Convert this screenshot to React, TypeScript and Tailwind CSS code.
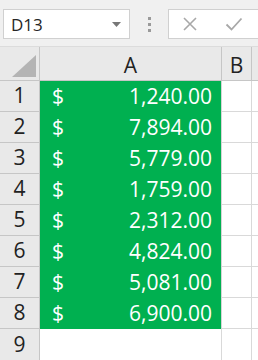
import React from 'react';

const values = ['1,240.00', '7,894.00', '5,779.00', '1,759.00', '2,312.00', '4,824.00', '5,081.00', '6,900.00'];

export default function App() {
  return (
    <div className="w-[258px] h-[360px] overflow-hidden bg-white" style={{ fontFamily: '"Open Sans", "Noto Sans", sans-serif' }}>
      {/* formula bar */}
      <div className="h-[47px] bg-[#f0f0f0] flex items-start pt-[9px] border-b border-[#dcdcdc]">
        <div className="ml-[3px] w-[127px] h-[30px] bg-white border border-[#d0d0d0] flex items-center pl-[7px] pr-[8px]">
          <span className="text-[17px] text-[#262626] flex-1 leading-none">D13</span>
          <svg width="9" height="5" viewBox="0 0 9 5"><path d="M0 0h9L4.5 5z" fill="#777" /></svg>
        </div>
        <div className="w-[38px] h-[30px] flex flex-col items-center justify-center gap-[3px]">
          <div className="w-[3px] h-[3px] bg-[#9a9a9a]" />
          <div className="w-[3px] h-[3px] bg-[#9a9a9a]" />
          <div className="w-[3px] h-[3px] bg-[#9a9a9a]" />
        </div>
        <div className="flex-1 h-[30px] bg-white border border-[#d0d0d0] border-r-0 flex items-center">
          <svg className="ml-[13px]" width="16" height="16" viewBox="0 0 16 16">
            <path d="M2 2l12 12M14 2L2 14" stroke="#a8a8a8" strokeWidth="1.6" />
          </svg>
          <svg className="ml-[27px]" width="18" height="16" viewBox="0 0 18 16">
            <path d="M1.5 8.5l5 5L16.5 2.5" stroke="#a8a8a8" strokeWidth="1.8" fill="none" />
          </svg>
        </div>
      </div>

      {/* grid */}
      <div className="grid grid-cols-[40px_182px_30px_1fr] bg-[#e9e9e9]">
        <div className="h-[34px] border-r border-b border-[#c6c6c6] flex items-end justify-end pr-[3px] pb-[3px]">
          <svg width="24" height="22" viewBox="0 0 24 22"><path d="M24 0v22H0z" fill="#b4b4b4" /></svg>
        </div>
        <div className="h-[34px] border-r border-b border-[#c6c6c6] flex items-end justify-center pb-[1px] text-[21px] leading-[28px] text-[#222]">A</div>
        <div className="h-[34px] border-r border-b border-[#c6c6c6] flex items-end justify-center pb-[1px] text-[21px] leading-[28px] text-[#222]">B</div>
        <div className="h-[34px] border-b border-[#c6c6c6]" />

        {values.map((v, i) => (
          <React.Fragment key={i}>
            <div className="h-[31px] border-r border-b border-[#c6c6c6] bg-[#e9e9e9] flex items-center justify-center text-[21px] text-[#222]">{i + 1}</div>
            <div className="h-[31px] bg-[#00b050] border-r border-[#d4d4d4] flex items-center justify-between pl-[12px] pr-[9px] text-[21px] text-white">
              <span>$</span>
              <span>{v}</span>
            </div>
            <div className="h-[31px] bg-white border-r border-b border-[#d9d9d9]" />
            <div className="h-[31px] bg-white border-b border-[#d9d9d9]" />
          </React.Fragment>
        ))}

        <div className="h-[31px] border-r border-[#c6c6c6] bg-[#e9e9e9] flex items-center justify-center text-[21px] text-[#222]">9</div>
        <div className="h-[31px] bg-white border-r border-[#d9d9d9]" />
        <div className="h-[31px] bg-white border-r border-[#d9d9d9]" />
        <div className="h-[31px] bg-white" />
      </div>
    </div>
  );
}
